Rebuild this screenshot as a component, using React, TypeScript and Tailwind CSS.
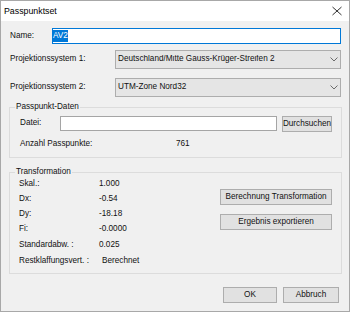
const Chevron = () => (
  <svg width="8" height="5" viewBox="0 0 8 5" className="shrink-0">
    <path d="M0.5 0.5 L4 4 L7.5 0.5" fill="none" stroke="#6b6b6b" strokeWidth="1" />
  </svg>
);

const Combo = ({ text }: { text: string }) => (
  <div className="flex-1 mr-[1px] h-[19px] border border-[#adadad] bg-[#e5e5e5] flex items-center pl-[2px] pr-[2px]">
    <span className="flex-1 truncate">{text}</span>
    <Chevron />
  </div>
);

const Btn = ({ text, className }: { text: string; className: string }) => (
  <div className={"h-[16px] border border-[#adadad] bg-[#e1e1e1] flex items-center justify-center " + className}>
    {text}
  </div>
);

const Row = ({ label, value, extra }: { label: string; value: string; extra?: string }) => (
  <div className={"h-[15px] flex items-center pl-[9px] " + (extra ?? "")}>
    <span className="w-[80px] shrink-0">{label}</span>
    <span>{value}</span>
  </div>
);

export default function App() {
  return (
    <div className="w-[350px] h-[313px] bg-white">
      <div className="w-[350px] h-[312px] border border-[#a8a8a8] bg-[#f0f0f0] flex flex-col font-['Liberation_Sans',Arial,sans-serif] text-[8.2px] leading-none text-[#111]">
        {/* title bar */}
        <div className="h-[20px] bg-white flex items-center justify-between pl-[3px] pr-[7px] shrink-0">
          <span className="text-[8.8px] text-black">Passpunktset</span>
          <svg width="10" height="10" viewBox="0 0 10 10">
            <path d="M0.5 1 L9.5 9 M9.5 1 L0.5 9" stroke="#333" strokeWidth="1" fill="none" />
          </svg>
        </div>

        <div className="flex-1 flex flex-col pl-[8px] pr-[7px]">
          {/* Name */}
          <div className="mt-[7px] h-[16px] flex items-center">
            <span className="w-[43px] pl-[1px] shrink-0">Name:</span>
            <div className="flex-1 mr-[1px] h-[16px] border border-[#0078d7] bg-white flex items-center">
              <span className="bg-[#0078d7] text-white h-[12px] flex items-center">AV2</span>
            </div>
          </div>

          {/* Projektionssystem 1 */}
          <div className="mt-[6px] h-[19px] flex items-center">
            <span className="w-[106px] pl-[1px] shrink-0">Projektionssystem 1:</span>
            <Combo text="Deutschland/Mitte Gauss-Krüger-Streifen 2" />
          </div>

          {/* Projektionssystem 2 */}
          <div className="mt-[9px] h-[19px] flex items-center">
            <span className="w-[106px] pl-[1px] shrink-0">Projektionssystem 2:</span>
            <Combo text="UTM-Zone Nord32" />
          </div>

          {/* Passpunkt-Daten */}
          <fieldset className="mt-[5px] border border-[#dcdcdc] pb-[6px]">
            <legend className="ml-[5px] px-[1px] leading-[10px]">Passpunkt-Daten</legend>
            <div className="mt-[4px] h-[16px] flex items-start">
              <span className="w-[50px] pl-[10px] shrink-0 h-[15px] flex items-center">Datei:</span>
              <div className="w-[217px] h-[15px] border border-[#a5a5a5] bg-white" />
              <Btn text="Durchsuchen" className="ml-[5px] w-[50px]" />
            </div>
            <div className="mt-[6px] h-[13px] flex items-center">
              <span className="w-[166px] pl-[10px] shrink-0">Anzahl Passpunkte:</span>
              <span>761</span>
            </div>
          </fieldset>

          {/* Transformation */}
          <fieldset className="mt-[9px] border border-[#dcdcdc] pb-[4px]">
            <legend className="ml-[5px] px-[1px] leading-[10px]">Transformation</legend>
            <div className="flex">
              <div className="flex flex-col">
                <Row label="Skal.:" value="1.000" />
                <Row label="Dx:" value="-0.54" />
                <Row label="Dy:" value="-18.18" />
                <Row label="Fi:" value="-0.0000" />
                <Row label="Standardabw. :" value="0.025" extra="mt-[1px]" />
                <div className="h-[15px] mt-[1px] flex items-center pl-[9px]">
                  <span className="w-[83px] shrink-0">Restklaffungsvert. :</span>
                  <span>Berechnet</span>
                </div>
              </div>
              <div className="ml-auto mr-[9px] flex flex-col">
                <Btn text="Berechnung Transformation" className="mt-[12px] w-[112px]" />
                <Btn text="Ergebnis exportieren" className="mt-[9px] w-[112px]" />
              </div>
            </div>
          </fieldset>

          {/* Bottom buttons */}
          <div className="mt-[13px] flex justify-end mr-[3px]">
            <Btn text="OK" className="w-[54px]" />
            <Btn text="Abbruch" className="ml-[6px] w-[56px]" />
          </div>
        </div>
      </div>
    </div>
  );
}
